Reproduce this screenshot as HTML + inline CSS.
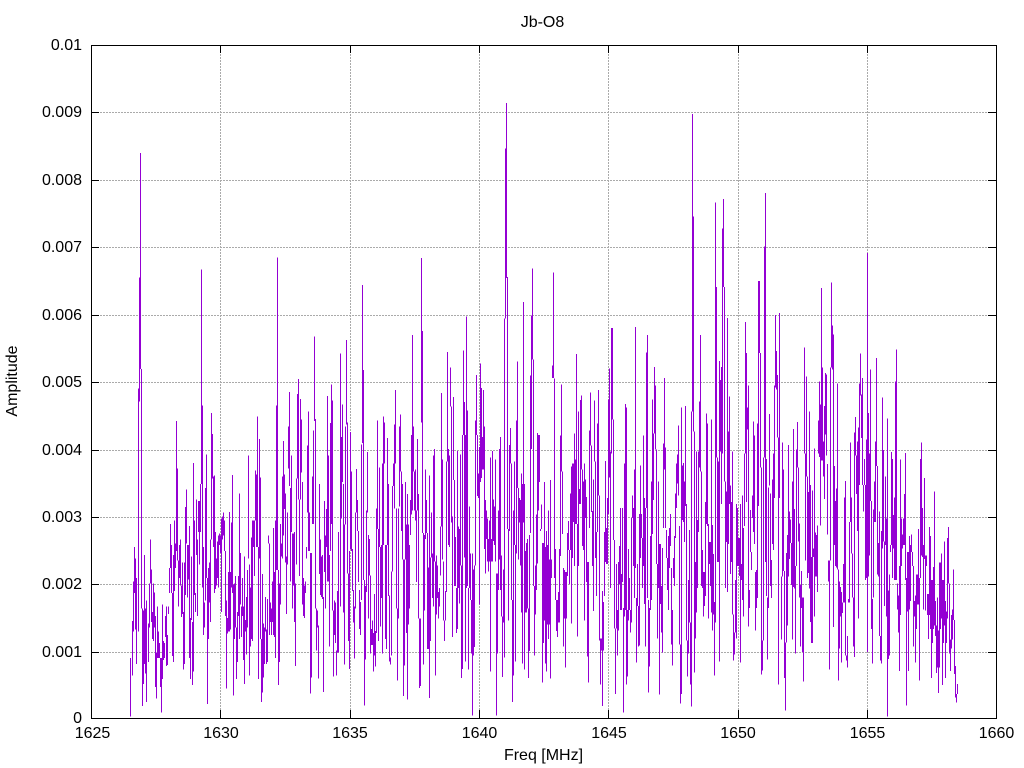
<!DOCTYPE html>
<html><head><meta charset="utf-8"><title>Jb-O8</title>
<style>
html,body{margin:0;padding:0;background:#fff;width:1024px;height:768px;overflow:hidden}
svg{display:block}
text{font-family:"Liberation Sans",Arial,sans-serif;font-size:16px;fill:#000}
.d{fill:none;stroke:#9400d3;stroke-width:1;vector-effect:non-scaling-stroke;shape-rendering:crispEdges}
</style></head><body>
<svg width="1024" height="768" viewBox="0 0 1024 768" xmlns="http://www.w3.org/2000/svg">
<rect width="1024" height="768" fill="#fff"/>
<path shape-rendering="crispEdges" fill="none" stroke="#aaa" stroke-width="1" stroke-dasharray="2 1" d="M100 652.5H988M100 584.5H988M100 517.5H988M100 450.5H988M100 382.5H988M100 315.5H988M100 247.5H988M100 180.5H988M100 112.5H988M220.5 710V53M350.5 710V53M479.5 710V53M608.5 710V53M738.5 710V53M867.5 710V53"/>
<g transform="translate(120.167,130) scale(.333333,.3827)"><path class="d" d="M31 1380V1533M37 1283V1425M40 1180V1310M43 1090V1210M46 1120V1305M49 1170V1395M55 675V1310M58 385V710M61 60V625M64 625V1250M67 1250V1505M70 1255V1447M73 1110V1395M76 1250V1420M79 1230V1495M85 1290V1390M88 1185V1300M91 1070V1185M94 1148V1285M97 1260V1330M100 1185V1335M103 1208V1300M106 1270V1455M109 1365V1485M112 1245V1380M115 1310V1380M118 1340V1380M121 1380V1455M124 1380V1522M127 1240V1435M130 1335V1385M133 1340V1380M136 1270V1325M139 1245V1400M142 1320V1398M145 1245V1265M148 1145V1210M151 1030V1145M154 1085V1210M157 1210V1375M160 1110V1390M163 1020V1205M166 1080V1145M169 760V1100M172 885V1125M175 1125V1245M178 1085V1170M181 1070V1190M184 1190V1272M187 1130V1265M190 1260V1410M193 1130V1395M196 985V1215M199 940V1080M202 1085V1222M205 1085V1175M208 1035V1380M211 1275V1435M214 1115V1280M217 1285V1450M220 870V1415M223 1020V1215M226 1210V1260M229 965V1110M232 1070V1270M235 970V1050M238 970V1135M241 925V1050M244 365V925M247 720V1195M250 1090V1320M253 1235V1300M256 935V1230M259 848V1170M262 1170V1500M265 1145V1330M268 1130V1235M271 1070V1285M274 740V1070M277 795V910M280 905V1090M283 903V1210M286 1050V1200M289 1120V1190M292 1075V1170M295 1060V1195M298 1055V1085M301 1060V1105M304 1015V1260M307 1010V1070M310 1000V1060M313 1020V1100M316 1100V1270M319 1230V1460M322 1275V1315M325 1155V1310M328 998V1310M331 1155V1305M334 1025V1195M337 902V1210M340 1188V1478M343 1185V1330M346 1165V1300M349 1300V1435M352 1260V1390M355 1165V1270M358 950V1330M361 1105V1240M364 1245V1325M367 1170V1270M370 1245V1385M373 1115V1448M376 1280V1310M379 1220V1370M382 1150V1300M385 850V1120M388 1135V1425M391 1195V1350M394 1065V1330M397 1020V1335M400 1020V1090M403 1020V1165M406 890V1020M409 900V1090M412 748V1090M415 1090V1435M418 808V1120M421 908V1330M424 1330V1495M427 1160V1470M430 1290V1430M433 1300V1395M436 1220V1310M439 1305V1395M442 1225V1390M445 1060V1080M448 1080V1320M451 1235V1285M454 1250V1320M457 1180V1285M460 1040V1320M463 1155V1325M466 1020V1380M469 720V1150M472 333V1150M475 1150V1450M478 1185V1390M481 1030V1240M484 1080V1115M487 905V1120M490 813V1060M493 900V990M496 950V1130M499 1115V1265M502 1000V1135M505 775V885M508 685V930M511 935V1180M514 850V1050M517 1055V1250M520 1055V1190M523 1050V1285M526 1185V1400M529 910V1135M532 690V910M535 650V965M538 965V1165M541 703V965M544 757V895M547 920V1240M550 1170V1270M553 1190V1275M556 1180V1210M559 1090V1120M562 825V1000M565 735V1100M568 1000V1100M571 1105V1472M574 1105V1430M577 905V1030M580 785V1030M583 540V760M586 755V1250M589 1250V1360M592 1255V1300M595 1295V1433M598 925V1160M601 1070V1215M604 1115V1220M607 1110V1225M610 1220V1468M613 970V1155M616 1060V1250M619 990V1090M622 695V1180M625 850V1180M628 1110V1350M631 765V1100M634 665V1030M637 707V1255M640 1255V1428M643 1230V1320M646 1235V1340M649 1360V1425M652 1205V1365M655 1050V1365"/></g>
<g transform="translate(340.167,90) scale(.333333,.40816)"><path class="d" d="M1 645V1265M4 850V1050M7 770V960M10 965V1280M13 1065V1408M16 825V1065M19 612V820M22 815V1185M25 1185V1350M28 1130V1418M31 838V1125M34 935V1130M37 1125V1228M40 1225V1305M43 1265V1393M46 1035V1270M49 928V1035M52 1005V1080M55 1080V1205M58 1225V1320M61 1255V1335M64 868V1250M67 478V865M70 686V1200M73 1200V1508M76 1215V1395M79 1030V1230M82 887V1035M85 1090V1295M88 1100V1190M91 1190V1380M94 1320V1360M97 1300V1360M100 1330V1425M103 1235V1385M106 1325V1412M109 1025V1330M112 810V1075M115 1075V1350M118 925V1120M121 1120V1315M124 1115V1245M127 915V1380M130 800V1115M133 815V915M136 1115V1345M139 1115V1370M142 853V1115M145 965V1240M148 1238V1400M151 1390V1408M154 1180V1385M157 970V1180M160 915V970M163 820V1025M166 735V915M169 1025V1270M172 1270V1447M175 1025V1295M178 825V1020M181 795V935M184 935V1080M187 965V1150M190 1150V1485M193 1150V1410M196 960V1150M199 1065V1330M202 990V1493M205 1065V1310M208 1115V1270M211 1005V1090M214 845V1040M217 600V1030M220 825V935M223 935V1030M226 930V1055M229 1030V1205M232 855V1030M235 990V1295M238 1295V1465M241 1295V1460M244 412V815M247 590V1085M250 1085V1408M253 1090V1275M256 930V1100M259 1005V1085M262 1085V1370M265 1170V1370M268 945V1490M271 1145V1350M274 1035V1145M277 1135V1245M280 895V1265M283 880V1155M286 1155V1435M289 1140V1285M292 1165V1245M295 1230V1295M298 1220V1265M301 1070V1190M304 742V1070M307 905V1150M310 1155V1300M313 1300V1350M316 1228V1300M319 910V1230M322 642V910M325 880V1115M328 895V1120M331 680V775M334 775V1060M337 1045V1340M340 752V955M343 955V1215M346 1095V1215M349 1220V1330M352 885V1320M355 1070V1220M358 1075V1258M361 893V1165M364 1165V1440M367 845V1418M370 638V845M373 765V1145M376 845V1400M379 555V1220M382 785V1215M385 1220V1420M388 1020V1220M391 1135V1250M394 1250V1380M397 1135V1533M400 1175V1385M403 1165V1365M406 810V1165M409 698V845M412 845V995M415 940V1000M418 875V1260M421 670V960M424 730V950M427 850V930M430 735V930M433 825V1125M436 1005V1185M439 1030V1100M442 1050V1155M445 1100V1180M448 1055V1155M451 900V1425M454 1100V1155M457 885V1155M460 1003V1105M463 1020V1115M466 905V1155M469 1185V1533M472 1185V1380M475 1030V1225M478 880V1150M481 850V1225M484 1140V1290M487 1290V1438M490 1175V1305M493 560V1390M496 143V560M499 32V460M502 458V1075M505 1075V1300M508 870V1080M511 828V915M514 915V1250M517 1250V1500M520 1030V1435M523 910V1115M526 1115V1400M529 810V1135M532 665V975M535 975V1150M538 1000V1060M541 1005V1165M544 940V1280M547 965V1405M550 520V1060M553 965V1420M556 1130V1280M559 1110V1280M562 1100V1270M565 1270V1440M568 1090V1375M571 700V1085M574 552V880M577 437V660M580 660V1215M583 1215V1385M586 1165V1285M589 1040V1225M592 840V1160M595 845V1030M598 845V960M601 1075V1080M604 1015V1075M607 1110V1452M610 1110V1355M613 960V1300M616 1120V1405M619 1080V1425M622 1115V1310M625 1030V1345M628 1150V1310M631 955V1442M634 1150V1195M637 675V705M640 447V705M643 707V1195M646 1125V1250M649 1250V1325M652 1250V1340M655 1230V1305M658 1125V1305"/></g>
<g transform="translate(560.167,100) scale(.333333,.40177)"><path class="d" d="M1 835V1135M4 708V925M7 925V1080M10 1165V1360M13 1170V1290M16 1175V1412M19 1175V1290M22 1078V1185M25 1048V1120M28 1120V1205M31 980V1120M34 912V1303M37 905V1140M40 905V1050M43 830V1160M46 895V1055M49 632V1055M52 1055V1335M55 775V1160M58 968V1005M61 747V1005M64 735V920M67 920V1110M70 950V1120M73 905V1295M76 945V1040M79 988V1200M82 1150V1385M85 1150V1450M88 822V1065M91 728V860M94 860V1025M97 1023V1160M100 945V1272M103 748V900M106 900V1140M109 1075V1235M112 805V1075M115 722V985M118 985V1345M121 1340V1455M124 1340V1370M127 1222V1508M130 1250V1370M133 1075V1235M136 898V1150M139 1065V1155M142 990V1155M145 745V1030M148 668V940M151 875V1215M154 567V880M157 567V795M160 795V1095M163 1095V1315M166 1315V1478M169 1155V1315M172 1270V1383M175 1150V1320M178 1110V1205M181 1015V1270M184 1180V1270M187 1015V1200M190 1265V1525M193 905V1285M196 757V1270M199 765V1455M202 1270V1435M205 1118V1295M208 1190V1270M211 1270V1325M214 1040V1300M217 985V1040M220 1015V1160M223 920V1240M226 565V1165M229 1240V1400M232 1155V1260M235 1260V1360M238 1030V1358M241 910V1140M244 1030V1090M247 1090V1215M250 835V1160M253 990V1255M256 1015V1360M259 628V1015M262 585V1240M265 1245V1475M268 1265V1410M271 1085V1270M274 950V1245M277 745V1080M280 830V995M283 665V830M286 710V870M289 870V1155M292 1155V1340M295 950V1215M298 1105V1480M301 1105V1255M304 1210V1325M307 1115V1375M310 855V1065M313 692V920M316 865V1065M319 1070V1140M322 1140V1220M325 1085V1270M328 1065V1165M331 1030V1110M334 1165V1355M337 1270V1408M340 1140V1190M343 1085V1210M346 980V1090M349 905V1015M352 882V955M355 810V985M358 1060V1355M361 1355V1502M364 765V1478M367 910V1045M370 903V1050M373 950V1100M376 762V1010M379 1005V1345M382 1345V1435M385 1195V1378M388 1070V1300M391 1300V1455M394 775V1510M397 35V775M400 290V825M403 825V1425M406 1150V1340M409 875V1275M412 1045V1215M415 875V1075M418 750V915M421 585V925M424 925V1210M427 1120V1215M430 1175V1285M433 1175V1260M436 1000V1235M439 780V1055M442 805V1060M445 1055V1290M448 1100V1155M451 1100V1210M454 795V1275M457 1058V1320M460 1130V1280M463 1250V1433M466 255V1300M469 465V890M472 890V1150M475 900V1150M478 650V1398M481 697V875M484 665V1005M487 320V880M490 247V465M493 465V950M496 950V1215M499 975V1100M502 543V1225M505 825V1105M508 738V1005M511 960V1180M514 1000V1150M517 875V1280M520 1280V1395M523 1325V1380M526 1195V1325M529 1005V1340M532 1015V1160M535 1090V1160M538 1090V1185M541 1005V1400M544 1155V1195M547 985V1245M550 1065V1285M553 880V1060M556 553V880M559 630V1000M562 765V820M565 710V1310M568 1220V1265M571 1020V1125M574 1125V1170M577 985V1040M580 800V1075M583 835V1105M586 1175V1320M589 1170V1265M592 805V1240M595 450V1010M598 450V630M601 630V915M604 915V1430M607 1345V1420M610 890V1345M613 365V890M616 232V1150M619 893V1235M622 1238V1393M625 965V1265M628 782V960M631 980V1210M634 1145V1240M637 945V1105M640 880V1120M643 710V990M646 535V715M649 625V720M652 685V840M655 840V1455M658 530V990"/></g>
<g transform="translate(770.5,180) scale(.333333,.35075)"><path class="d" d="M33 1130V1310M36 748V1130M39 825V1115M42 1115V1420M45 1318V1513M48 1063V1318M51 1012V1270M54 755V1130M57 945V1080M60 968V1035M63 1035V1155M66 860V1310M69 710V1160M72 938V1165M75 1100V1350M78 768V1100M81 690V820M84 820V1030M87 980V1190M90 1155V1330M93 1115V1220M96 1190V1345M99 1190V1430M102 477V780"/></g>
<g transform="translate(770.167,180) scale(.333333,.35075)"><path class="d" d="M106 780V1085M109 560V845M112 845V1135M115 890V1120M118 660V1165M121 870V1260M124 1075V1320M127 885V1320M130 1050V1075M133 765V1245M136 1005V1130M139 1012V1130M142 985V1175M145 685V780M148 575V790M151 640V985M154 308V800M157 535V800M160 745V845M163 645V910M166 550V725M169 555V785M172 810V1010M175 1085V1145M178 1085V1395M181 535V1085M184 292V535M187 415V540M190 440V1275M193 815V1040M196 915V1100M199 880V1105M202 580V1110M205 1110V1427M208 1145V1335M211 1160V1245M214 1175V1375M217 1205V1235M220 1095V1205M223 905V1205M226 858V1355M229 1355V1370M232 1300V1390M235 1195V1205M238 975V1205M241 748V975M244 905V1065M247 1065V1190M250 1190V1330M253 720V1360M256 675V785M259 785V895M262 745V1000M265 705V1250M268 580V870M271 495V615M274 612V735M277 565V870M280 870V945M283 795V870M286 870V1140M289 740V1135M292 208V1345M295 665V1130M298 780V1070M301 540V915M304 915V1280M307 1195V1378M310 940V1190M313 860V975M316 745V975M319 507V815M322 815V1125M325 1035V1130M328 945V1300M331 1300V1370M334 1000V1378M337 620V1050M340 770V1030M343 1030V1215M346 845V1040M349 965V1245M352 680V1530M355 1170V1365M358 1125V1355M361 1040V1060M364 775V1040M367 795V1135M370 955V1050M373 905V1140M376 575V1140M379 483V1140M382 1150V1225M385 1185V1290M388 1100V1400M391 797V1240M394 965V1100M397 1010V1050M400 965V1040M403 895V1040M406 778V1140M409 1135V1498M412 1060V1230M415 1060V1400M418 1015V1225M421 1040V1200M424 1010V1060M427 1060V1100M430 1100V1330M433 1200V1245M436 1185V1375M439 1125V1280M442 1125V1210M445 995V1210M448 1135V1427M451 795V1135M454 748V1070M457 935V1075M460 1040V1225M463 850V1080M466 1070V1228M469 1070V1100M472 1180V1240M475 1180V1308M478 990V1240M481 1015V1280M484 1140V1420M487 1140V1320M490 1103V1280M493 888V1270M496 1200V1300M499 1270V1405M502 1190V1390M505 1285V1463M508 1090V1390M511 1090V1280M514 1065V1250M517 1140V1440M520 1140V1320M523 1030V1270M526 1200V1420M529 1230V1320M532 1020V1250M535 990V1150M538 1150V1350M541 1310V1400M544 1240V1335M547 1225V1310M550 1110V1255M553 1255V1408M556 1385V1475M559 1465V1490M562 1437V1465"/></g>
<path shape-rendering="crispEdges" fill="none" stroke="#000" stroke-width="1" d="M91.5 45.5H996.5V718.5H91.5ZM91 652.5H99M996 652.5H988M91 584.5H99M996 584.5H988M91 517.5H99M996 517.5H988M91 450.5H99M996 450.5H988M91 382.5H99M996 382.5H988M91 315.5H99M996 315.5H988M91 247.5H99M996 247.5H988M91 180.5H99M996 180.5H988M91 112.5H99M996 112.5H988M220.5 718V710M220.5 45V53M350.5 718V710M350.5 45V53M479.5 718V710M479.5 45V53M608.5 718V710M608.5 45V53M738.5 718V710M738.5 45V53M867.5 718V710M867.5 45V53"/>
<g text-anchor="end">
<text x="82" y="50">0.01</text>
<text x="82" y="117">0.009</text>
<text x="82" y="185">0.008</text>
<text x="82" y="252">0.007</text>
<text x="82" y="320">0.006</text>
<text x="82" y="387">0.005</text>
<text x="82" y="455">0.004</text>
<text x="82" y="522">0.003</text>
<text x="82" y="589">0.002</text>
<text x="82" y="657">0.001</text>
<text x="82" y="723">0</text>
</g>
<g text-anchor="middle">
<text x="92.5" y="738">1625</text>
<text x="221" y="738">1630</text>
<text x="350" y="738">1635</text>
<text x="479.5" y="738">1640</text>
<text x="609" y="738">1645</text>
<text x="738" y="738">1650</text>
<text x="867.5" y="738">1655</text>
<text x="996.5" y="738">1660</text>
<text x="542.5" y="27">Jb-O8</text>
<text x="543.5" y="760">Freq [MHz]</text>
<text transform="translate(17,381) rotate(-90)">Amplitude</text>
</g>
</svg>
</body></html>
